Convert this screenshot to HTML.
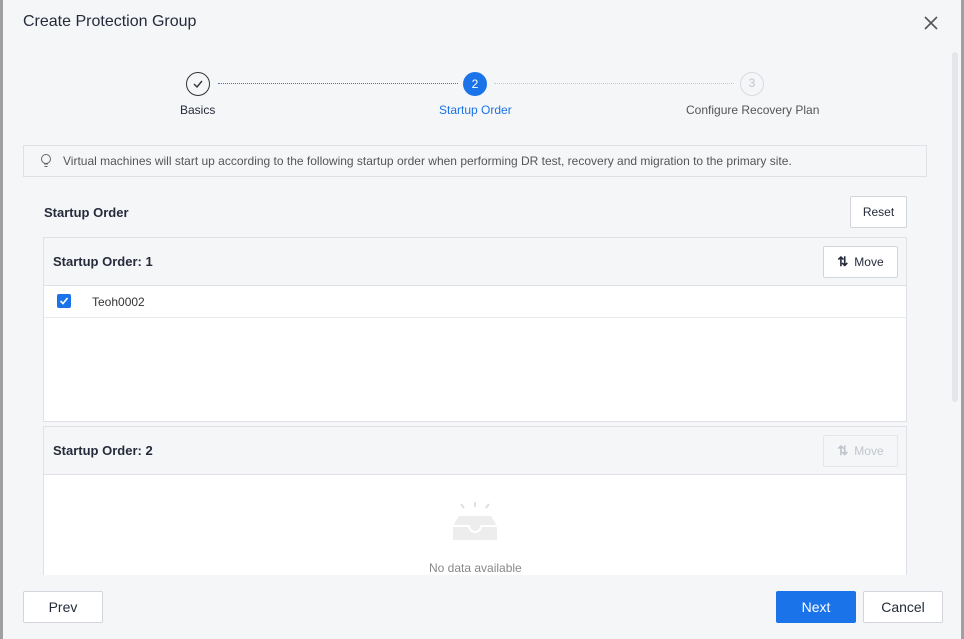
<!DOCTYPE html>
<html><head><style>
*{box-sizing:border-box;margin:0;padding:0}
body{width:964px;height:639px;background:#f5f6f8;font-family:"Liberation Sans",sans-serif;position:relative;overflow:hidden;color:#252b3a}
.a{position:absolute}
.btn{position:absolute;background:#fff;border:1px solid #d2d5dc;border-radius:2px;font-size:12px;display:flex;align-items:center;justify-content:center}
</style></head><body>
<div class="a" style="left:0;top:0;width:3px;height:639px;background:#a0a0a0"></div>
<div class="a" style="right:0;top:0;width:3px;height:639px;background:#a0a0a0"></div>
<div class="a" style="left:952px;top:52px;width:6px;height:350px;background:#e4e6ea;border-radius:3px"></div>
<div class="a" style="left:23px;top:13px;font-size:16px;color:#252b3a">Create Protection Group</div>
<svg class="a" style="left:924px;top:16px" width="14" height="14"><path d="M1 1L13 13M13 1L1 13" stroke="#555" stroke-width="1.6"/></svg>

<div class="a" style="left:186px;top:72px;width:24px;height:24px;border:1.5px solid #333;border-radius:50%"></div>
<svg class="a" style="left:192px;top:78px" width="12" height="12"><path d="M2 6L5 9L10 3" stroke="#333" stroke-width="1.4" fill="none"/></svg>
<div class="a" style="left:218px;top:83px;width:240px;border-top:1px dotted #4a6fc0"></div>
<div class="a" style="left:463px;top:72px;width:24px;height:24px;background:#1a73e8;border-radius:50%;color:#fff;font-size:12px;text-align:center;line-height:24px">2</div>
<div class="a" style="left:494px;top:83px;width:240px;border-top:1px dotted #c8ccd3"></div>
<div class="a" style="left:740px;top:72px;width:24px;height:24px;border:1.5px solid #d8dbe0;border-radius:50%;color:#c0c4cc;font-size:12px;text-align:center;line-height:21px">3</div>
<div class="a" style="left:180px;top:103px;font-size:12px">Basics</div>
<div class="a" style="left:439px;top:103px;font-size:12px;color:#1a73e8">Startup Order</div>
<div class="a" style="left:686px;top:103px;font-size:12px;color:#555">Configure Recovery Plan</div>

<div class="a" style="left:23px;top:145px;width:904px;height:32px;border:1px solid #dfe1e6;background:#f5f6f8"></div>
<svg class="a" style="left:40px;top:153px" width="12" height="16"><circle cx="6" cy="6" r="4.5" stroke="#666" fill="none"/><path d="M4 11h4M4.5 13.5h3" stroke="#666"/></svg>
<div class="a" style="left:63px;top:154px;font-size:12px;color:#555">Virtual machines will start up according to the following startup order when performing DR test, recovery and migration to the primary site.</div>

<div class="a" style="left:44px;top:205px;font-size:13px;font-weight:bold">Startup Order</div>
<div class="btn" style="left:850px;top:196px;width:57px;height:32px">Reset</div>

<div class="a" style="left:43px;top:237px;width:864px;height:185px;border:1px solid #dfe1e6;background:#fff"></div>
<div class="a" style="left:44px;top:238px;width:862px;height:48px;background:#f5f6f8;border-bottom:1px solid #dfe1e6"></div>
<div class="a" style="left:53px;top:254px;font-size:13px;font-weight:bold">Startup Order: 1</div>
<div class="btn" style="left:823px;top:246px;width:75px;height:32px"><span style="font-size:13px;margin-right:6px;font-weight:bold">⇅</span>Move</div>
<div class="a" style="left:57px;top:294px;width:14px;height:14px;background:#1a73e8;border-radius:2px"></div>
<svg class="a" style="left:57px;top:294px" width="14" height="14"><path d="M3.5 7L6 9.5L10.5 4" stroke="#fff" stroke-width="1.6" fill="none"/></svg>
<div class="a" style="left:92px;top:295px;font-size:12px;color:#333">Teoh0002</div>
<div class="a" style="left:44px;top:317px;width:862px;border-top:1px solid #e8eaee"></div>

<div class="a" style="left:43px;top:426px;width:864px;height:160px;border:1px solid #dfe1e6;background:#fff"></div>
<div class="a" style="left:44px;top:427px;width:862px;height:48px;background:#f5f6f8;border-bottom:1px solid #dfe1e6"></div>
<div class="a" style="left:53px;top:443px;font-size:13px;font-weight:bold">Startup Order: 2</div>
<div class="btn" style="left:823px;top:435px;width:75px;height:32px;color:#c0c4cc;border-color:#e4e6ea;background:#f5f6f8"><span style="font-size:13px;margin-right:6px;font-weight:bold">⇅</span>Move</div>
<svg class="a" style="left:451px;top:501px" width="48" height="42"><path d="M10 3l3 4M24 1v5M38 3l-3 4" stroke="#e0e0e0" stroke-width="2"/><path d="M8 15h32l6 10v14H2V25z" fill="#ededed"/><path d="M2 25h16a6 6 0 0 0 12 0h16" stroke="#fff" stroke-width="2" fill="none"/></svg>
<div class="a" style="left:429px;top:561px;font-size:12px;color:#888">No data available</div>
<div class="a" style="left:0;top:575px;width:961px;height:64px;background:#f5f6f8"></div>
<div class="a" style="left:0;top:0;width:3px;height:639px;background:#a0a0a0"></div>

<div class="btn" style="left:23px;top:591px;width:80px;height:32px;font-size:14px">Prev</div>
<div class="btn" style="left:776px;top:591px;width:80px;height:32px;font-size:14px;background:#1a73e8;border-color:#1a73e8;color:#fff">Next</div>
<div class="btn" style="left:863px;top:591px;width:80px;height:32px;font-size:14px">Cancel</div>
</body></html>
